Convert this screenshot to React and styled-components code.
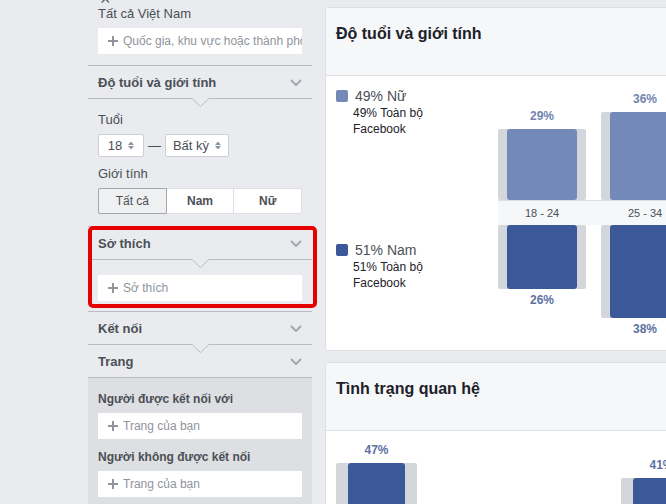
import React from "react";
import styled, { createGlobalStyle } from "styled-components";

const GlobalStyle = createGlobalStyle`
  html, body {
    margin: 0;
    padding: 0;
    background: #e9ebee;
  }
  body {
    font-family: "Liberation Sans", Arial, sans-serif;
    overflow: hidden;
  }
`;

const Page = styled.div`
  display: flex;
  align-items: flex-start;
  gap: 13px;
  height: 504px;
  padding-left: 88px;
  overflow: hidden;
  background: #e9ebee;
`;

/* ---------- sidebar ---------- */

const Sidebar = styled.aside`
  width: 224px;
  flex-shrink: 0;
  margin-top: -10px;
  display: flex;
  flex-direction: column;
  color: #4b4f56;
`;

const Block = styled.div`
  display: flex;
  flex-direction: column;
  padding: ${(p) => p.$pad || "0 10px"};
  background: ${(p) => (p.$dark ? "#dddfe2" : "transparent")};
`;

const Close = styled.div`
  height: 14px;
  font-size: 18px;
  line-height: 19px;
  padding-left: 2px;
  color: #606770;
`;

const Label = styled.div`
  font-size: ${(p) => (p.$bold ? "12px" : "13px")};
  font-weight: ${(p) => (p.$bold ? 700 : 400)};
  line-height: 16px;
  margin-top: ${(p) => p.$mt || 0}px;
`;

const Field = styled.div`
  display: flex;
  align-items: center;
  gap: 5px;
  height: 26px;
  box-sizing: border-box;
  padding: 0 10px;
  margin-top: ${(p) => p.$mt ?? 6}px;
  background: #fff;
  overflow: hidden;
  white-space: nowrap;
  font-size: 12px;
  color: #90949c;
  svg {
    flex-shrink: 0;
  }
`;

const SectionHeader = styled.div`
  display: flex;
  align-items: center;
  justify-content: space-between;
  height: 32px;
  padding: 0 10px;
  font-size: 13px;
  font-weight: 700;
`;

const DividerRow = styled.div`
  display: flex;
  align-items: flex-start;
  height: 1px;
`;

const Line = styled.div`
  flex: 1;
  height: 1px;
  background: #b9bdc3;
`;

const NotchSvg = styled.svg`
  display: block;
  flex-shrink: 0;
  margin-bottom: -8px;
`;

const SelectRow = styled.div`
  display: flex;
  align-items: center;
  gap: 4px;
  margin-top: 6px;
  height: 23px;
`;

const Select = styled.div`
  display: flex;
  align-items: center;
  justify-content: center;
  gap: 6px;
  width: ${(p) => p.$w}px;
  height: 23px;
  box-sizing: border-box;
  background: #fff;
  border: 1px solid #ccd0d5;
  border-radius: 2px;
  font-size: 13px;
`;

const Dash = styled.span`
  font-size: 13px;
  color: #4b4f56;
`;

const Segmented = styled.div`
  display: flex;
  height: 26px;
  margin-top: 6px;
`;

const Segment = styled.div`
  flex: 1;
  display: flex;
  align-items: center;
  justify-content: center;
  position: relative;
  z-index: ${(p) => (p.$active ? 1 : 0)};
  margin-left: -1px;
  background: ${(p) => (p.$active ? "#eff0f2" : "#fff")};
  border: 1px solid ${(p) => (p.$active ? "#a3a8b0" : "#dddfe2")};
  font-size: 12px;
  font-weight: ${(p) => (p.$active ? 400 : 700)};
  color: #4b4f56;
  &:first-child {
    margin-left: 0;
    border-radius: 2px 0 0 2px;
  }
  &:last-child {
    border-radius: 0 2px 2px 0;
  }
`;

const Highlighted = styled.div`
  position: relative;
`;

const RedFrame = styled.div`
  position: absolute;
  top: -1px;
  left: 0;
  right: -5px;
  bottom: 3px;
  border: 4px solid #e60000;
  border-radius: 5px;
  pointer-events: none;
`;

/* ---------- main ---------- */

const Main = styled.main`
  display: flex;
  flex-direction: column;
  gap: 11px;
  width: 560px;
  flex-shrink: 0;
  margin-top: 7px;
`;

const Card = styled.section`
  background: #fff;
  border: 1px solid #dddfe2;
  border-radius: 3px;
  overflow: hidden;
`;

const CardHeader = styled.header`
  height: 68px;
  box-sizing: border-box;
  padding: 16px 10px 0;
  background: #f6f7f9;
  border-bottom: 1px solid #dddfe2;
  font-size: 16px;
  line-height: 20px;
  font-weight: 700;
  color: #1d2129;
`;

const CardBody = styled.div`
  display: flex;
  height: ${(p) => p.$h || "auto"};
  box-sizing: border-box;
  padding: ${(p) => p.$pad || "11px 10px 0"};
  gap: ${(p) => p.$gap || 0}px;
  align-items: ${(p) => p.$align || "flex-start"};
`;

const Legend = styled.div`
  width: 162px;
  flex-shrink: 0;
  display: flex;
  flex-direction: column;
  gap: 104px;
`;

const LegendItem = styled.div`
  display: flex;
  flex-direction: column;
`;

const LegendTitle = styled.div`
  display: flex;
  align-items: center;
  gap: 7px;
  font-size: 14px;
  line-height: 18px;
  color: #4b4f56;
`;

const Swatch = styled.span`
  width: 12px;
  height: 12px;
  border-radius: 2px;
  background: ${(p) => p.$color};
`;

const LegendSub = styled.div`
  max-width: 95px;
  padding-left: 17px;
  font-size: 12px;
  line-height: 16px;
  color: #1d2129;
`;

const Chart = styled.div`
  display: flex;
  flex-direction: column;
  flex: 1;
`;

const BarRow = styled.div`
  display: flex;
  gap: 15px;
  height: ${(p) => p.$h || "auto"};
  align-items: ${(p) => (p.$top ? "flex-end" : "flex-start")};
`;

const Column = styled.div`
  width: ${(p) => p.$w || 88}px;
  display: flex;
  flex-direction: column;
  align-items: center;
`;

const Pct = styled.div`
  font-size: 12px;
  line-height: 14px;
  font-weight: 700;
  color: ${(p) => (p.$light ? "#7185b2" : "#5d71a2")};
  margin: ${(p) => (p.$below ? "4px 0 0" : "0 0 6px")};
`;

const Track = styled.div`
  align-self: stretch;
  padding: 0 ${(p) => p.$inset || 9}px;
  background: #d3d6db;
  border-radius: 2px;
`;

const Bar = styled.div`
  background: ${(p) => p.$color};
  border-radius: 3px;
`;

const Band = styled.div`
  display: flex;
  gap: 15px;
  height: 25px;
  box-sizing: border-box;
  border-top: 1px solid #dddfe2;
  background: #f6f7f9;
`;

const BandCell = styled.div`
  width: 88px;
  text-align: center;
  font-size: 11px;
  line-height: 24px;
  color: #4b4f56;
`;

const LIGHT = "#7389b7";
const DARK = "#3b5998";

const ageGroups = [
  { label: "18 - 24", women: 29, men: 26 },
  { label: "25 - 34", women: 36, men: 38 },
];

const relationship = [{ pct: 47 }, { pct: 41 }];

const Chevron = () => (
  <svg width="12" height="7" viewBox="0 0 12 7">
    <polyline points="1,1 6,6 11,1" fill="none" stroke="#a4a9b0" strokeWidth="2" />
  </svg>
);

const Plus = () => (
  <svg width="10" height="10" viewBox="0 0 10 10">
    <path d="M5 0v10M0 5h10" stroke="#90949c" strokeWidth="2" />
  </svg>
);

const UpDown = () => (
  <svg width="6" height="9" viewBox="0 0 6 9">
    <path d="M0 4L3 0.5 6 4z M0 5L3 8.5 6 5z" fill="#8d949e" />
  </svg>
);

const Divider = ({ notch }) => (
  <DividerRow>
    <Line />
    {notch && (
      <NotchSvg width="17" height="9" viewBox="0 0 17 9">
        <polyline points="0,0.5 8.5,8.5 17,0.5" fill="#e9ebee" stroke="#b9bdc3" strokeWidth="1" />
      </NotchSvg>
    )}
    {notch && <Line />}
  </DividerRow>
);

const Header = ({ children }) => (
  <SectionHeader>
    <span>{children}</span>
    <Chevron />
  </SectionHeader>
);

const Input = ({ placeholder, mt }) => (
  <Field $mt={mt}>
    <Plus />
    <span>{placeholder}</span>
  </Field>
);

const App = () => {
  return (
    <>
      <GlobalStyle />
      <Page>
        <Sidebar>
          <Block $pad="0 10px 11px">
            <Close>×</Close>
            <Label $mt={2}>Tất cả Việt Nam</Label>
            <Input placeholder="Quốc gia, khu vực hoặc thành phố" />
          </Block>
          <Divider />
          <Header>Độ tuổi và giới tính</Header>
          <Divider notch />
          <Block $pad="0 10px 12px">
            <Label $mt={13}>Tuổi</Label>
            <SelectRow>
              <Select $w={46}>
                18 <UpDown />
              </Select>
              <Dash>—</Dash>
              <Select $w={64}>
                Bất kỳ <UpDown />
              </Select>
            </SelectRow>
            <Label $mt={9}>Giới tính</Label>
            <Segmented>
              <Segment $active>Tất cả</Segment>
              <Segment>Nam</Segment>
              <Segment>Nữ</Segment>
            </Segmented>
          </Block>
          <Divider />
          <Highlighted>
            <Header>Sở thích</Header>
            <Divider notch />
            <Block $pad="0 10px 10px">
              <Input placeholder="Sở thích" mt={15} />
            </Block>
            <RedFrame />
          </Highlighted>
          <Divider />
          <Header>Kết nối</Header>
          <Divider notch />
          <Header>Trang</Header>
          <Divider />
          <Block $dark $pad="0 10px 40px">
            <Label $bold $mt={13}>Người được kết nối với</Label>
            <Input placeholder="Trang của bạn" />
            <Label $bold $mt={10}>Người không được kết nối</Label>
            <Input placeholder="Trang của bạn" />
          </Block>
        </Sidebar>

        <Main>
          <Card>
            <CardHeader>Độ tuổi và giới tính</CardHeader>
            <CardBody $h="274px">
              <Legend>
                <LegendItem>
                  <LegendTitle>
                    <Swatch $color={LIGHT} />
                    49% Nữ
                  </LegendTitle>
                  <LegendSub>49% Toàn bộ Facebook</LegendSub>
                </LegendItem>
                <LegendItem>
                  <LegendTitle>
                    <Swatch $color={DARK} />
                    51% Nam
                  </LegendTitle>
                  <LegendSub>51% Toàn bộ Facebook</LegendSub>
                </LegendItem>
              </Legend>
              <Chart>
                <BarRow $top $h="113px">
                  {ageGroups.map((g) => (
                    <Column key={g.label}>
                      <Pct $light>{g.women}%</Pct>
                      <Track>
                        <Bar $color={LIGHT} style={{ height: Math.round(g.women * 2.45) }} />
                      </Track>
                    </Column>
                  ))}
                </BarRow>
                <Band>
                  {ageGroups.map((g) => (
                    <BandCell key={g.label}>{g.label}</BandCell>
                  ))}
                </Band>
                <BarRow>
                  {ageGroups.map((g) => (
                    <Column key={g.label}>
                      <Track>
                        <Bar $color={DARK} style={{ height: Math.round(g.men * 2.45) }} />
                      </Track>
                      <Pct $below>{g.men}%</Pct>
                    </Column>
                  ))}
                </BarRow>
              </Chart>
            </CardBody>
          </Card>

          <Card>
            <CardHeader>Tình trạng quan hệ</CardHeader>
            <CardBody $pad="12px 10px 30px" $gap={204} $align="flex-end">
              {relationship.map((r, i) => (
                <Column key={i} $w={81}>
                  <Pct>{r.pct}%</Pct>
                  <Track $inset={12}>
                    <Bar $color={DARK} style={{ height: Math.round(r.pct * 2.4) }} />
                  </Track>
                </Column>
              ))}
            </CardBody>
          </Card>
        </Main>
      </Page>
    </>
  );
};

export default App;
